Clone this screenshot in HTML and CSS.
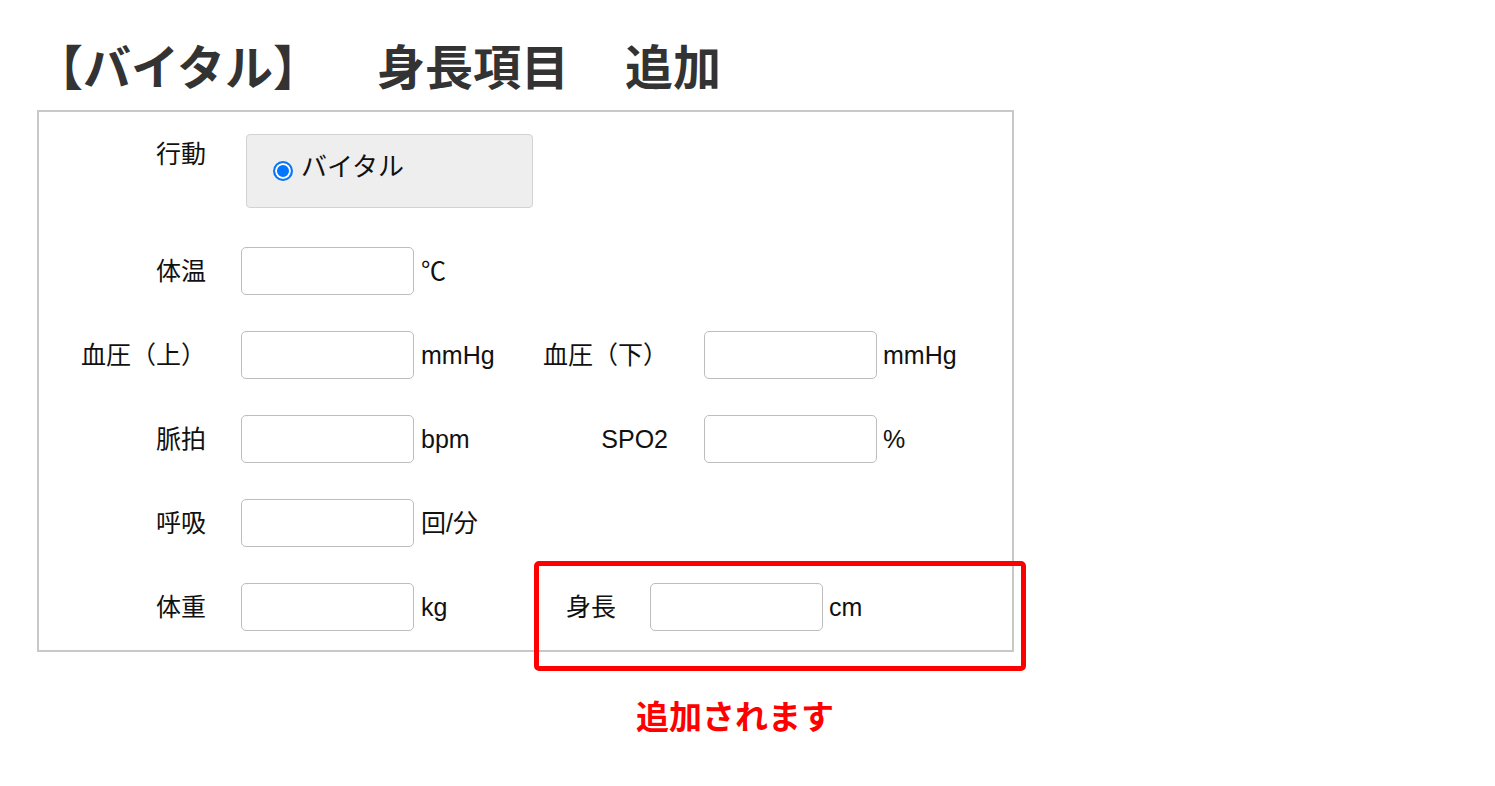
FILE: index.html
```html
<!DOCTYPE html>
<html lang="ja">
<head>
  <meta charset="utf-8">
  <title>バイタル 身長項目 追加</title>
  <link rel="stylesheet" href="styles.css">
</head>
<body>
  <div class="page">
    <h1 class="title">【バイタル】<span class="sp"></span>身長項目<span class="sp"></span>追加</h1>

    <form class="vital-form">
      <div class="action-row">
        <div class="label label-top">行動</div>
        <label class="radio-box">
          <input type="radio" name="action" checked>
          <span>バイタル</span>
        </label>
      </div>

      <div class="field-grid">
        <div class="label c1">体温</div>
        <input type="text" class="num">
        <span class="unit">℃</span>

        <div class="label c1">血圧（上）</div>
        <input type="text" class="num">
        <span class="unit">mmHg</span>
        <div class="label c2">血圧（下）</div>
        <input type="text" class="num">
        <span class="unit u2">mmHg</span>

        <div class="label c1">脈拍</div>
        <input type="text" class="num">
        <span class="unit">bpm</span>
        <div class="label c2">SPO2</div>
        <input type="text" class="num">
        <span class="unit u2">%</span>

        <div class="label c1">呼吸</div>
        <input type="text" class="num">
        <span class="unit">回/分</span>

        <div class="label c1">体重</div>
        <input type="text" class="num">
        <span class="unit">kg</span>
        <div class="added">
          <div class="label">身長</div>
          <input type="text" class="num">
          <span class="unit u2">cm</span>
          <div class="mark"></div>
        </div>
      </div>
    </form>

    <p class="note">追加されます</p>
  </div>
</body>
</html>
```

FILE: styles.css
```css
body {
  margin: 0;
  padding: 0;
  background-color: #ffffff;
  font-family: "Liberation Sans", "Noto Sans CJK JP", sans-serif;
  color: #111111;
}
.page {
  padding-left: 37px;
}
.title {
  margin: 40px 0 22px -2px;
  font-family: "Noto Sans CJK JP", sans-serif;
  font-size: 48px;
  line-height: 48px;
  font-weight: 700;
  color: #333333;
  white-space: nowrap;
}
.title .sp {
  display: inline-block;
  width: 56px;
}
.vital-form {
  box-sizing: border-box;
  width: 977px;
  border: 2px solid #c8c8c8;
  padding: 22px 0 19px;
}
.label {
  font-size: 25px;
  line-height: 48px;
  text-align: right;
  white-space: nowrap;
}
.action-row {
  display: flex;
  align-items: flex-start;
  margin-bottom: 39px;
}
.label-top {
  box-sizing: border-box;
  width: 202px;
  padding-right: 35px;
  line-height: 40px;
}
.radio-box {
  box-sizing: border-box;
  display: flex;
  align-items: center;
  width: 287px;
  height: 74px;
  margin-left: 5px;
  padding-left: 26px;
  background-color: #eeeeee;
  border: 1px solid #d2d2d2;
  border-radius: 4px;
  font-family: "Noto Sans CJK JP", sans-serif;
  font-size: 26px;
}
.radio-box input {
  appearance: none;
  box-sizing: border-box;
  width: 20px;
  height: 20px;
  margin: 0 8px 0 0;
  border: 2px solid #0a75f5;
  border-radius: 50%;
  background-color: #0075ff;
  box-shadow: inset 0 0 0 2px #ffffff;
}
.radio-box span {
  line-height: 26px;
  padding-bottom: 12px;
}
.field-grid {
  display: grid;
  grid-template-columns: 202px 173px 87px 203px 173px 1fr;
  grid-auto-rows: 48px;
  row-gap: 36px;
  align-items: center;
}
.field-grid .c1 {
  grid-column: 1;
  padding-right: 35px;
}
.field-grid .c2 {
  grid-column: 4;
  padding-right: 36px;
}
.num {
  box-sizing: border-box;
  width: 173px;
  height: 48px;
  margin: 0;
  padding: 0 8px;
  border: 1px solid #bdbdbd;
  border-radius: 5px;
  background-color: #ffffff;
  font-size: 20px;
}
.unit {
  padding-left: 7px;
  font-size: 25px;
  line-height: 48px;
  white-space: nowrap;
}
.unit.u2 {
  padding-left: 6px;
}
.added {
  grid-column: 4 / 7;
  position: relative;
  display: flex;
  align-items: center;
  padding-left: 65px;
}
.added .label {
  margin-right: 34px;
}
.mark {
  position: absolute;
  left: 33px;
  top: -22px;
  box-sizing: border-box;
  width: 492px;
  height: 110px;
  border: 5px solid #ff0000;
  border-radius: 5px;
}
.note {
  margin: 47px 0 0 599px;
  font-family: "Noto Sans CJK JP", sans-serif;
  font-size: 33px;
  line-height: 33px;
  font-weight: 700;
  color: #ff0000;
}
```
